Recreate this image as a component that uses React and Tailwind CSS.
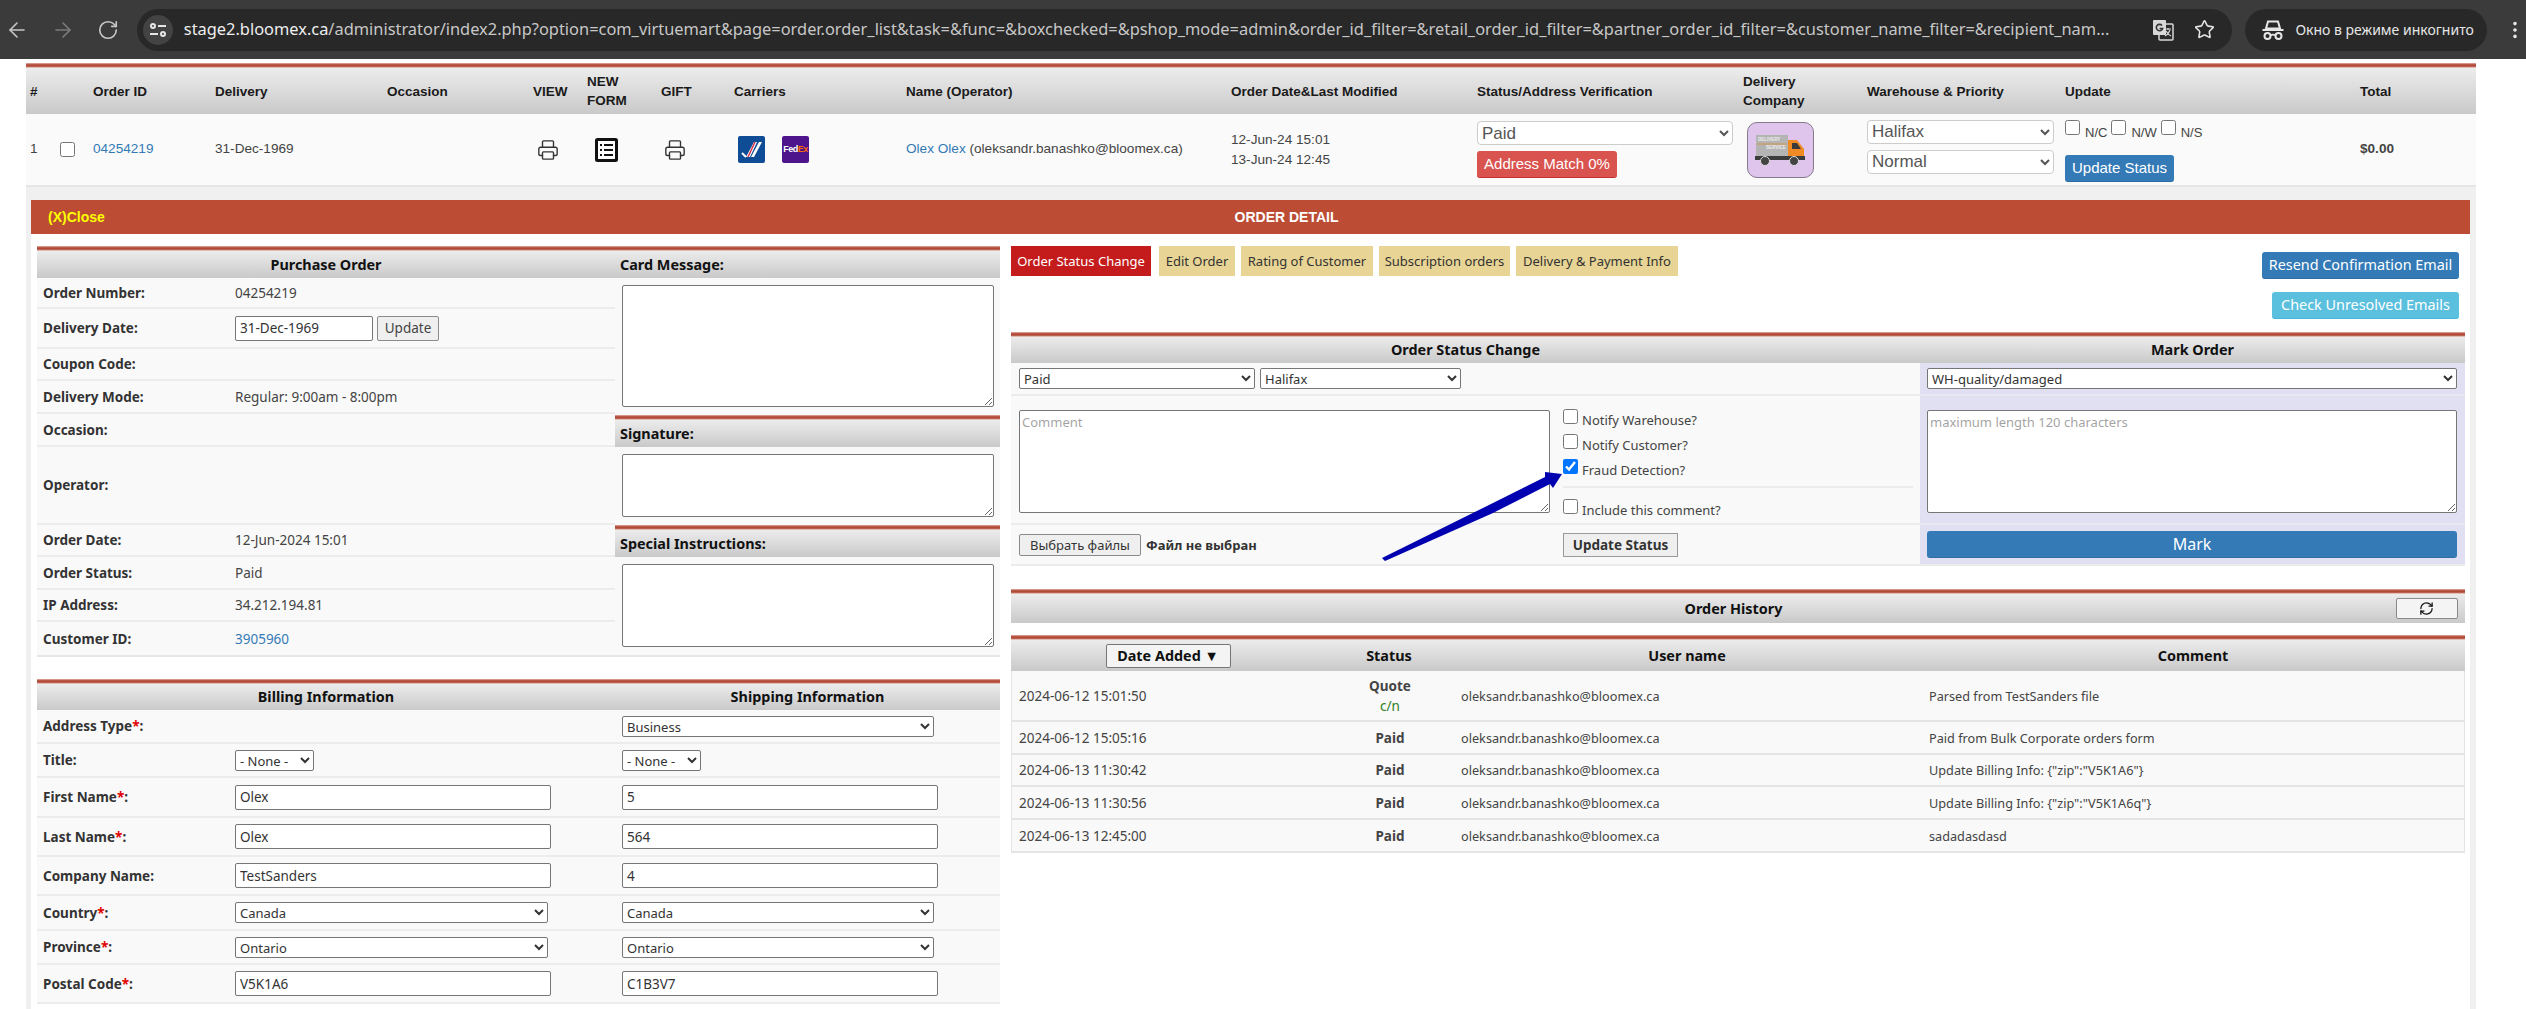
import { ArrowLeft, ArrowRight, RotateCw, Star, EllipsisVertical, Printer, RefreshCw } from 'lucide-react';

const RedLine = () => (
  <div className="h-[5px] bg-[linear-gradient(#e2b3aa,#b24a38_35%,#b24a38_65%,#f6e9e4)]" />
);

const headGrad = 'bg-[linear-gradient(#ececec,#c9c9c9)]';
const inputCls = 'h-[25px] border border-[#767676] rounded-[2px] bg-white px-[4px] text-[13.5px] text-[#333]';
const selectCls = 'h-[21px] border border-[#767676] rounded-[2px] bg-white text-[13px] text-[#333]';

const Req = () => <span className="text-[#e00000]">*</span>;

// rows of the purchase order block
const purchaseRows = [
  { label: 'Order Number:', h: 'h-[31px]', value: '04254219' },
  { label: 'Delivery Date:', h: 'h-[40px]', date: true },
  { label: 'Coupon Code:', h: 'h-[32px]' },
  { label: 'Delivery Mode:', h: 'h-[33px]', value: 'Regular: 9:00am - 8:00pm' },
  { label: 'Occasion:', h: 'h-[33px]' },
  { label: 'Operator:', h: 'h-[78px]' },
  { label: 'Order Date:', h: 'h-[32px]', value: '12-Jun-2024 15:01' },
  { label: 'Order Status:', h: 'h-[33px]', value: 'Paid' },
  { label: 'IP Address:', h: 'h-[32px]', value: '34.212.194.81' },
  { label: 'Customer ID:', h: 'h-[33px]', value: '3905960', link: true },
];

const history = [
  { date: '2024-06-12 15:01:50', status: 'Quote', sub: 'c/n', comment: 'Parsed from TestSanders file', h: 'h-[51px]' },
  { date: '2024-06-12 15:05:16', status: 'Paid', comment: 'Paid from Bulk Corporate orders form', h: 'h-[33px]' },
  { date: '2024-06-13 11:30:42', status: 'Paid', comment: 'Update Billing Info: {"zip":"V5K1A6"}', h: 'h-[32px]' },
  { date: '2024-06-13 11:30:56', status: 'Paid', comment: 'Update Billing Info: {"zip":"V5K1A6q"}', h: 'h-[33px]' },
  { date: '2024-06-13 12:45:00', status: 'Paid', comment: 'sadadasdasd', h: 'h-[33px]' },
];

const tabs = [
  { label: 'Edit Order', w: 'w-[76px]' },
  { label: 'Rating of Customer', w: 'w-[132px]' },
  { label: 'Subscription orders', w: 'w-[131px]' },
  { label: 'Delivery & Payment Info', w: 'w-[162px]' },
];

const Field = ({ value }) => <input defaultValue={value} className={`${inputCls} w-[316px]`} />;

const Sel = ({ value, cls }) => (
  <select defaultValue={value} className={`${selectCls} ${cls}`}>
    <option>{value}</option>
  </select>
);

const BillRow = ({ h, label, left, right }) => (
  <div className={`${h} grid grid-cols-[578px_385px] border-b-2 border-[#ececec] items-center`}>
    <div className="grid grid-cols-[192px_1fr] items-center pl-[6px]">
      <div className="font-bold text-[#333]">{label}</div>
      <div>{left}</div>
    </div>
    <div className="pl-[7px]">{right}</div>
  </div>
);

const CheckLine = ({ label, checked, cls }) => (
  <label className={`flex items-start gap-[4px] text-[13px] text-[#444] ${cls}`}>
    <input type="checkbox" defaultChecked={checked} className="w-[15px] h-[15px] m-0" />
    <span className="mt-[2px] leading-[18px]">{label}</span>
  </label>
);

const TuneIcon = () => (
  <svg width="18" height="16" viewBox="0 0 18 16" fill="none" stroke="#e6e6e6" strokeWidth="2">
    <circle cx="4" cy="4" r="2" />
    <path d="M9 4h8M1 12h8" />
    <circle cx="14" cy="12" r="2" />
  </svg>
);

const TranslateIcon = () => (
  <svg width="22" height="22" viewBox="0 0 22 22">
    <rect x="7" y="5" width="14" height="16" rx="1" fill="#2a2a2a" stroke="#d8d8d8" strokeWidth="1.5" />
    <rect x="1" y="1" width="13" height="15" rx="1" fill="#d8d8d8" />
    <path d="M10 6.5a3.2 3.2 0 1 0 0.6 3h-3" fill="none" stroke="#333" strokeWidth="1.6" />
    <path d="M13 10h6M16 9v2M18 11c-1 3-3 5-5 6M14 12c1 2 3 4 5 5" fill="none" stroke="#d8d8d8" strokeWidth="1.2" />
  </svg>
);

const IncognitoIcon = () => (
  <svg width="24" height="24" viewBox="0 0 24 24" fill="none" stroke="#e6e6e6" strokeWidth="2">
    <path d="M7 3.5h10l2 7H5z" fill="none" />
    <path d="M1.5 12h21" />
    <circle cx="6.5" cy="18" r="3" />
    <circle cx="17.5" cy="18" r="3" />
    <path d="M9.5 17.5c1.5-1 3.5-1 5 0" strokeWidth="1.6" />
  </svg>
);

const ListIcon = () => (
  <svg width="23" height="24" viewBox="0 0 23 24" fill="none">
    <rect x="1.5" y="1.5" width="20" height="21" rx="1" fill="#fff" stroke="#111" strokeWidth="3" />
    <path d="M9 7h9M9 12h9M9 17h9M5 7h2M5 12h2M5 17h2" stroke="#111" strokeWidth="2" />
  </svg>
);

const CarrierCheck = () => (
  <div className="w-[27px] h-[27px] rounded-[2px] bg-[#0f4c96] flex items-center justify-center">
    <svg width="23" height="20" viewBox="0 0 23 20" fill="none">
      <path d="M2 13l4 4" stroke="#fff" strokeWidth="2" />
      <path d="M6 17l4-0 7-15h-3z" fill="#fff" />
      <path d="M11 17h3l8-15h-3z" fill="#fff" />
      <path d="M8 17L15 2" stroke="#d8324a" strokeWidth="1.5" />
    </svg>
  </div>
);

const FedexIcon = () => (
  <div className="w-[27px] h-[27px] rounded-[2px] bg-[#4d148c] flex items-center justify-center text-[9px] font-bold tracking-[-0.5px] leading-none">
    <span className="text-white">Fed</span>
    <span className="text-[#ff6600]">Ex</span>
  </div>
);

const TruckIcon = () => (
  <svg width="52" height="34" viewBox="0 0 52 34">
    <rect x="1" y="2" width="32" height="21" fill="#b4b4b4" />
    <path d="M2 11h30" stroke="#e08a2c" strokeWidth="0.8" />
    <text x="3" y="8" fontSize="4.5" fontWeight="700" fill="#efefef" fontFamily="Liberation Sans">DELIVERY</text>
    <text x="11" y="16" fontSize="4.5" fontWeight="700" fill="#efefef" fontFamily="Liberation Sans">SERVICE</text>
    <path d="M33 7h9l7 9v9H33z" fill="#f08a24" />
    <path d="M37 10h5l4 6h-9z" fill="#3a3a3a" />
    <rect x="0" y="23" width="50" height="4" fill="#3c3c3c" />
    <circle cx="10" cy="28" r="4.5" fill="#444" stroke="#ddd" strokeWidth="1" />
    <circle cx="39" cy="28" r="4.5" fill="#444" stroke="#ddd" strokeWidth="1" />
  </svg>
);

const FraudArrow = () => (
  <svg className="absolute left-[1375px] top-[465px] pointer-events-none" width="195" height="100" viewBox="0 0 195 100">
    <polygon points="7,93 118,38 170,12 170,7 187,9 178,23 175,19 118,48 10,96" fill="#0000b0" />
  </svg>
);

const App = () => {
  return (
    <div className="relative w-[2526px] h-[1009px] overflow-hidden bg-white font-['Liberation_Sans',Arial,sans-serif] text-[14px] text-[#333]">
      {/* browser chrome */}
      <div className="h-[59px] bg-[#3b3b3b] flex items-center text-[#e6e6e6]">
        <div className="w-[137px] flex items-center pl-[5px] gap-[22px]">
          <ArrowLeft size={24} strokeWidth={1.6} className="text-[#c8c8c8]" />
          <ArrowRight size={24} strokeWidth={1.6} className="text-[#7c7c7c]" />
          <RotateCw size={22} strokeWidth={1.8} className="text-[#c8c8c8]" />
        </div>
        <div className="w-[2099px] h-[42px] rounded-full bg-[#282828] flex items-center pl-[6px] pr-[17px]">
          <div className="w-[30px] h-[30px] rounded-full bg-[#434343] flex items-center justify-center">
            <TuneIcon />
          </div>
          <div className="ml-[11px] flex-1 whitespace-nowrap overflow-hidden text-[16.4px] text-[#c7c7c7] font-['Noto_Sans',sans-serif]">
            <span className="text-[#eeeeee]">stage2.bloomex.ca</span>
            /administrator/index2.php?option=com_virtuemart&amp;page=order.order_list&amp;task=&amp;func=&amp;boxchecked=&amp;pshop_mode=admin&amp;order_id_filter=&amp;retail_order_id_filter=&amp;partner_order_id_filter=&amp;customer_name_filter=&amp;recipient_nam...
          </div>
          <div className="flex items-center gap-[20px] ml-[10px]">
            <TranslateIcon />
            <Star size={21} strokeWidth={1.8} />
          </div>
        </div>
        <div className="ml-[13px] w-[242px] h-[42px] rounded-full bg-[#282828] flex items-center pl-[16px] gap-[10px] text-[14px] font-['Noto_Sans',sans-serif] whitespace-nowrap">
          <IncognitoIcon />
          <span>Окно в режиме инкогнито</span>
        </div>
        <EllipsisVertical size={22} className="ml-[17px]" />
      </div>

      {/* page */}
      <div className="ml-[26px] w-[2450px] pt-[4px]">
        <RedLine />
        <div className={`${headGrad} h-[46px] grid grid-cols-[67px_122px_172px_146px_54px_74px_73px_172px_325px_246px_266px_124px_198px_295px_116px] items-center font-bold text-[13.5px] text-[#1a1a1a] leading-[19px]`}>
          <div className="pl-[4px]">#</div>
          <div>Order ID</div>
          <div>Delivery</div>
          <div>Occasion</div>
          <div>VIEW</div>
          <div>NEW<br />FORM</div>
          <div>GIFT</div>
          <div>Carriers</div>
          <div>Name (Operator)</div>
          <div>Order Date&amp;Last Modified</div>
          <div>Status/Address Verification</div>
          <div>Delivery<br />Company</div>
          <div>Warehouse &amp; Priority</div>
          <div>Update</div>
          <div>Total</div>
        </div>
        <div className="h-[73px] bg-[#fafafa] border-b-2 border-[#e6e6e6] grid grid-cols-[67px_122px_172px_146px_54px_74px_73px_172px_325px_246px_266px_124px_198px_295px_116px] items-center text-[13.6px] text-[#444]">
          <div className="flex items-center pl-[4px]">
            <span className="w-[30px]">1</span>
            <input type="checkbox" className="w-[15px] h-[15px] m-0" />
          </div>
          <a className="text-[#337ab7]">04254219</a>
          <div>31-Dec-1969</div>
          <div />
          <div className="pl-[4px]"><Printer size={22} strokeWidth={1.5} className="text-[#333]" /></div>
          <div className="pl-[8px]"><ListIcon /></div>
          <div className="pl-[3px]"><Printer size={22} strokeWidth={1.5} className="text-[#333]" /></div>
          <div className="flex items-center gap-[17px] pl-[4px]">
            <CarrierCheck />
            <FedexIcon />
          </div>
          <div><a className="text-[#337ab7]">Olex Olex</a> (oleksandr.banashko@bloomex.ca)</div>
          <div className="leading-[20px]">12-Jun-24 15:01<br />13-Jun-24 12:45</div>
          <div className="flex flex-col gap-[6px]">
            <select defaultValue="Paid" className="w-[256px] h-[24px] rounded-[4px] border border-[#ccc] bg-white text-[17px] text-[#555]"><option>Paid</option></select>
            <div className="w-[140px] h-[27px] rounded-[3px] bg-[#d9534f] border-b border-[#c9302c] text-white text-[15px] flex items-center justify-center">Address Match 0%</div>
          </div>
          <div className="pl-[4px]">
            <div className="w-[67px] h-[56px] rounded-[10px] bg-[#dfc4ec] border border-[#857a8c] flex items-center justify-center"><TruckIcon /></div>
          </div>
          <div className="flex flex-col gap-[6px] mb-[6px]">
            <select defaultValue="Halifax" className="w-[187px] h-[24px] rounded-[4px] border border-[#ccc] bg-white text-[17px] text-[#555]"><option>Halifax</option></select>
            <select defaultValue="Normal" className="w-[187px] h-[24px] rounded-[4px] border border-[#ccc] bg-white text-[17px] text-[#555]"><option>Normal</option></select>
          </div>
          <div className="flex flex-col gap-[12px] pt-[3px]">
            <div className="flex items-start text-[13px] leading-[20px]">
              <input type="checkbox" className="w-[15px] h-[15px] m-0" /><span className="ml-[5px] mt-[3px] mr-[4px]">N/C</span>
              <input type="checkbox" className="w-[15px] h-[15px] m-0" /><span className="ml-[5px] mt-[3px] mr-[4px]">N/W</span>
              <input type="checkbox" className="w-[15px] h-[15px] m-0" /><span className="ml-[5px] mt-[3px]">N/S</span>
            </div>
            <button className="w-[109px] h-[27px] rounded-[3px] bg-[#337ab7] border-b border-[#2e6da4] text-white text-[15px]">Update Status</button>
          </div>
          <div className="font-bold">$0.00</div>
        </div>

        {/* order detail frame */}
        <div className="bg-[#f0f0f0] pl-[5px] pr-[6px] pt-[13px]">
          <div className="h-[34px] bg-[#bc4c34] flex items-center font-bold text-[14px]">
            <div className="w-[72px] pl-[17px] text-[#ffff00] whitespace-nowrap">(X)Close</div>
            <div className="flex-1 text-center text-white">ORDER DETAIL</div>
          </div>
          <div className="bg-white h-[800px] pt-[12px] pl-[6px] pr-[5px] flex gap-[11px] font-['Noto_Sans',sans-serif] text-[13.5px] leading-[18px] text-[#444]">
            {/* left column */}
            <div className="w-[963px] shrink-0">
              <div className="bg-[#f9f9f9] border-b-2 border-[#e6e6e6]">
                <RedLine />
                <div className="grid grid-cols-[578px_385px]">
                  <div>
                    <div className={`h-[27px] ${headGrad} flex items-center justify-center font-bold text-[14.4px] text-[#111]`}>Purchase Order</div>
                    {purchaseRows.map((row) => (
                      <div key={row.label} className={`${row.h} grid grid-cols-[192px_1fr] items-center pl-[6px] border-b-2 border-[#ececec] last:border-b-0`}>
                        <div className="font-bold text-[#333]">{row.label}</div>
                        {row.date ? (
                          <div className="flex gap-[4px]">
                            <input defaultValue="31-Dec-1969" className={`${inputCls} w-[138px]`} />
                            <button className="w-[62px] h-[25px] border border-[#8a8a8a] rounded-[2px] bg-[#efefef] text-[13.5px] text-[#444]">Update</button>
                          </div>
                        ) : (
                          <div className={row.link ? 'text-[#337ab7]' : ''}>{row.value}</div>
                        )}
                      </div>
                    ))}
                  </div>
                  <div className="flex flex-col">
                    <div className={`h-[27px] ${headGrad} flex items-center pl-[5px] font-bold text-[14.4px] text-[#111]`}>Card Message:</div>
                    <div className="h-[137px] pt-[7px] pl-[7px]">
                      <textarea className="block w-[372px] h-[122px] border border-[#767676] rounded-[2px] bg-white" />
                    </div>
                    <RedLine />
                    <div className={`h-[27px] ${headGrad} flex items-center pl-[5px] font-bold text-[14.4px] text-[#111]`}>Signature:</div>
                    <div className="h-[78px] pt-[7px] pl-[7px]">
                      <textarea className="block w-[372px] h-[63px] border border-[#767676] rounded-[2px] bg-white" />
                    </div>
                    <RedLine />
                    <div className={`h-[27px] ${headGrad} flex items-center pl-[5px] font-bold text-[14.4px] text-[#111]`}>Special Instructions:</div>
                    <div className="pt-[7px] pl-[7px]">
                      <textarea className="block w-[372px] h-[83px] border border-[#767676] rounded-[2px] bg-white" />
                    </div>
                  </div>
                </div>
              </div>

              <div className="mt-[22px] bg-[#f9f9f9]">
                <RedLine />
                <div className={`h-[26px] ${headGrad} grid grid-cols-[578px_385px] items-center font-bold text-[14.4px] text-[#111] text-center`}>
                  <div>Billing Information</div>
                  <div>Shipping Information</div>
                </div>
                <BillRow h="h-[34px]" label={<>Address Type<Req />:</>} right={<Sel value="Business" cls="w-[312px]" />} />
                <BillRow h="h-[34px]" label="Title:" left={<Sel value="- None -" cls="w-[79px]" />} right={<Sel value="- None -" cls="w-[79px]" />} />
                <BillRow h="h-[40px]" label={<>First Name<Req />:</>} left={<Field value="Olex" />} right={<Field value="5" />} />
                <BillRow h="h-[39px]" label={<>Last Name<Req />:</>} left={<Field value="Olex" />} right={<Field value="564" />} />
                <BillRow h="h-[39px]" label="Company Name:" left={<Field value="TestSanders" />} right={<Field value="4" />} />
                <BillRow h="h-[35px]" label={<>Country<Req />:</>} left={<Sel value="Canada" cls="w-[313px]" />} right={<Sel value="Canada" cls="w-[312px]" />} />
                <BillRow h="h-[34px]" label={<>Province<Req />:</>} left={<Sel value="Ontario" cls="w-[313px]" />} right={<Sel value="Ontario" cls="w-[312px]" />} />
                <BillRow h="h-[39px]" label={<>Postal Code<Req />:</>} left={<Field value="V5K1A6" />} right={<Field value="C1B3V7" />} />
              </div>
            </div>

            {/* right column */}
            <div className="w-[1454px] shrink-0">
              <div className="h-[86px] flex justify-between">
                <div className="flex gap-[6px] h-[30px] text-[13px]">
                  <div className="w-[140px] mr-[2px] bg-[#c41c1c] text-white flex items-center justify-center whitespace-nowrap">Order Status Change</div>
                  {tabs.map((tab) => (
                    <div key={tab.label} className={`${tab.w} bg-[#e8d595] text-[#333] flex items-center justify-center whitespace-nowrap`}>{tab.label}</div>
                  ))}
                </div>
                <div className="flex flex-col items-end gap-[13px] pt-[6px] pr-[6px] text-[14.4px] text-white">
                  <div className="w-[197px] h-[27px] rounded-[3px] bg-[#337ab7] border-b border-[#2e6da4] flex items-center justify-center whitespace-nowrap">Resend Confirmation Email</div>
                  <div className="w-[187px] h-[27px] rounded-[3px] bg-[#5bc0de] border-b border-[#46b8da] flex items-center justify-center whitespace-nowrap">Check Unresolved Emails</div>
                </div>
              </div>

              <RedLine />
              <div className={`h-[26px] ${headGrad} grid grid-cols-[909px_545px] items-center font-bold text-[14.4px] text-[#111] text-center`}>
                <div>Order Status Change</div>
                <div>Mark Order</div>
              </div>
              <div className="grid grid-cols-[909px_545px] border-b-2 border-[#ececec]">
                <div className="bg-[#f9f9f9]">
                  <div className="h-[33px] border-b-2 border-[#ececec] flex items-center gap-[5px] pl-[8px]">
                    <Sel value="Paid" cls="w-[236px]" />
                    <Sel value="Halifax" cls="w-[201px]" />
                  </div>
                  <div className="h-[129px] border-b-2 border-[#ececec] flex pl-[8px] pt-[14px]">
                    <textarea placeholder="Comment" className="block w-[531px] h-[103px] border border-[#767676] rounded-[2px] bg-white text-[13px] p-[2px]" />
                    <div className="ml-[13px] w-[350px] mt-[-1px]">
                      <div className="flex flex-col gap-[5px] pb-[7px] border-b-2 border-[#ececec]">
                        <CheckLine label="Notify Warehouse?" />
                        <CheckLine label="Notify Customer?" />
                        <CheckLine label="Fraud Detection?" checked />
                      </div>
                      <CheckLine label="Include this comment?" cls="mt-[11px]" />
                    </div>
                  </div>
                  <div className="h-[39px] flex items-center pl-[8px]">
                    <button className="w-[122px] h-[22px] border border-[#8a8a8a] rounded-[2px] bg-[#efefef] text-[13px] text-[#333] whitespace-nowrap">Выбрать файлы</button>
                    <span className="ml-[5px] w-[417px] font-bold text-[13px] text-[#333]">Файл не выбран</span>
                    <button className="w-[115px] h-[24px] border border-[#9a9a9a] bg-[#efefef] font-bold text-[#333]">Update Status</button>
                  </div>
                </div>
                <div className="bg-[#e0e0f2]">
                  <div className="h-[33px] border-b-2 border-[#e8e8f5] flex items-center pl-[7px]">
                    <Sel value="WH-quality/damaged" cls="w-[530px]" />
                  </div>
                  <div className="h-[129px] border-b-2 border-[#e8e8f5] pl-[7px] pt-[14px]">
                    <textarea placeholder="maximum length 120 characters" className="block w-[530px] h-[103px] border border-[#767676] rounded-[2px] bg-white text-[13px] p-[2px]" />
                  </div>
                  <div className="h-[39px] flex items-center pl-[7px]">
                    <button className="w-[530px] h-[27px] rounded-[3px] bg-[#337ab7] border-b border-[#2e6da4] text-white text-[16px]">Mark</button>
                  </div>
                </div>
              </div>

              <div className="mt-[23px]">
                <RedLine />
                <div className={`h-[29px] ${headGrad} flex items-center justify-between font-bold text-[14.4px] text-[#111]`}>
                  <div className="w-[62px]" />
                  <div className="ml-[-2px]">Order History</div>
                  <button className="mr-[7px] w-[62px] h-[21px] border border-[#8a8a8a] rounded-[2px] bg-[#f4f4f4] flex items-center justify-center">
                    <RefreshCw size={15} strokeWidth={2} className="text-[#111]" />
                  </button>
                </div>
              </div>

              <div className="mt-[12px]">
                <RedLine />
                <div className={`h-[31px] ${headGrad} grid grid-cols-[314px_128px_468px_544px] items-center text-center font-bold text-[14.4px] text-[#111]`}>
                  <div className="flex justify-center">
                    <button className="w-[125px] h-[24px] border border-[#767676] rounded-[2px] bg-[#f4f4f4] font-bold">Date Added ▼</button>
                  </div>
                  <div>Status</div>
                  <div>User name</div>
                  <div>Comment</div>
                </div>
                <div className="bg-[#f9f9f9] border-x border-[#e4e4e4]">
                  {history.map((row) => (
                    <div key={row.date} className={`${row.h} grid grid-cols-[314px_128px_468px_544px] items-center border-b-2 border-[#e4e4e4] text-[12.7px]`}>
                      <div className="pl-[7px] text-[13.5px]">{row.date}</div>
                      <div className="text-center font-bold text-[13.5px] leading-[20px]">
                        {row.status}
                        {row.sub && <div className="font-normal text-[#2e7d22]">{row.sub}</div>}
                      </div>
                      <div className="pl-[7px]">oleksandr.banashko@bloomex.ca</div>
                      <div className="pl-[7px]">{row.comment}</div>
                    </div>
                  ))}
                </div>
              </div>
            </div>
          </div>
        </div>
      </div>

      <FraudArrow />
    </div>
  );
};

export default App;
